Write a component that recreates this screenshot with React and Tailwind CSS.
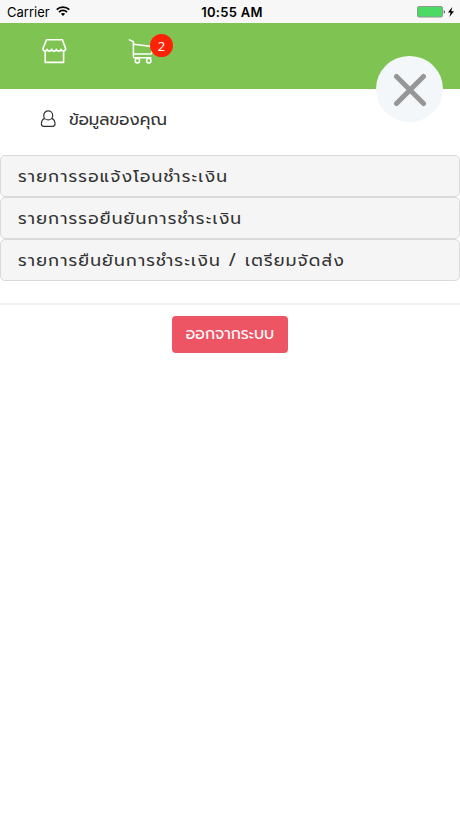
import React from "react";

const menus = [
    "รายการรอแจ้งโอนชำระเงิน",
    "รายการรอยืนยันการชำระเงิน",
    "รายการยืนยันการชำระเงิน / เตรียมจัดส่ง",
];

const StatusBar = () => (
    <div className="h-[23px] bg-[#f7f7f7] grid grid-cols-3 items-center pt-px pl-[7px] pr-[5px] text-[13px] leading-none text-black font-['Inter',sans-serif]">
        <div className="flex items-center gap-[6px]">
            <span>Carrier</span>
            <svg className="-mt-[2px]" width="14" height="10" viewBox="0 0 14 10" fill="none" stroke="#000" strokeWidth="1.7">
                <path d="M0.7 3.7C4.2 0.2 9.8 0.2 13.3 3.7" />
                <path d="M3 6.1c2.2-2.2 5.8-2.2 8 0" />
                <path d="M4.9 7.8c1.2-1.1 3-1.1 4.2 0L7 10z" fill="#000" stroke="none" />
            </svg>
        </div>
        <span className="text-center font-semibold tracking-[0.3px] pl-[2px]">10:55 AM</span>
        <div className="flex items-center justify-end">
            <svg width="38" height="12" viewBox="0 0 38 12">
                <rect x="0.5" y="0.5" width="25" height="10.5" rx="1.5" fill="#4cd964" stroke="#8b9a8d" />
                <path d="M26.8 4v3.6c1.3-.4 1.3-3.2 0-3.6z" fill="#222" />
                <path d="M35.2 1 31 6.5h2.6L32.4 11l4.6-5.8h-2.7z" fill="#000" />
            </svg>
        </div>
    </div>
);

const StoreIcon = () => (
    <svg width="26" height="26" viewBox="0 0 26 26" fill="none" stroke="#fff" strokeWidth="1.6" strokeLinejoin="round" strokeLinecap="round">
        <path d="M4.6 1.8h15.8l3.2 8.6c0 3.2-3.9 3.4-4.6.8-.7 2.6-3.9 2.6-4.6 0-.7 2.6-4 2.6-4.7 0-.7 2.6-3.9 2.6-4.6 0-.7 2.6-4.1 2.4-4.1-.8z" />
        <path d="M3.2 13.2v11.2h18.4V13.2" />
    </svg>
);

const CartIcon = () => (
    <svg width="26" height="26" viewBox="0 0 26 26" fill="none" stroke="#fff" strokeWidth="1.5" strokeLinejoin="round" strokeLinecap="round">
        <path d="M1.4 1.9l4 1.8v14.8c0 .8.4 1.2 1.2 1.2h16.2" />
        <path d="M5.4 6.3l18.6 2.2v6c0 1-.6 1.6-1.6 1.6H5.4" />
        <circle cx="9.4" cy="22.7" r="2.2" />
        <circle cx="20.8" cy="22.7" r="2.2" />
    </svg>
);

const UserIcon = () => (
    <svg width="16" height="18" viewBox="0 0 16 18" fill="none" stroke="#333" strokeWidth="1.2" strokeLinejoin="round">
        <circle cx="8.2" cy="5.4" r="4.5" />
        <path d="M4.8 8.3C2.4 9 1.4 11.2 1.4 14c0 1.6 1 2.4 2.4 2.4h8.8c1.4 0 2.4-.8 2.4-2.4 0-2.8-1-5-3.4-5.7" />
    </svg>
);

const App = () => {
    return (
        <div className="relative w-full h-[818px] overflow-hidden bg-white text-[#333] font-['Prompt','Kanit','Noto_Sans_Thai','Noto_Sans',sans-serif]">
            <StatusBar />

            {/* Header */}
            <header className="h-[66px] bg-[#7fc453] flex items-start pt-[15px] pl-[42px]">
                <StoreIcon />
                <div className="relative ml-[60px]">
                    <CartIcon />
                    <span className="absolute left-[22px] -top-[4.5px] w-[23px] h-[23px] rounded-full bg-[#fd2106] text-white text-[13px] leading-[25px] text-center font-['Noto_Sans',sans-serif]">2</span>
                </div>
            </header>

            <button className="absolute left-[376px] top-[56px] w-[67px] h-[66px] rounded-full bg-[#f4f7f9] flex items-center justify-center">
                <svg className="mt-px" width="34" height="34" viewBox="0 0 34 34" stroke="#969696" strokeWidth="5" strokeLinecap="round">
                    <path d="M3.5 3.5l27 27M30.5 3.5l-27 27" />
                </svg>
            </button>

            {/* Profile */}
            <div className="h-[66px] flex items-center gap-[13px] pl-[40px] pb-[6px]">
                <UserIcon />
                <span className="whitespace-nowrap pt-[2px] text-[16.7px] leading-none">ข้อมูลของคุณ</span>
            </div>

            <ul>
                {menus.map((label) => (
                    <li key={label} className="h-[42px] flex items-center pl-[17px] rounded-[5px] border border-[#dadada] bg-[#f5f5f5]">
                        <span className="whitespace-nowrap text-[17px] leading-none tracking-[1.18px]">{label}</span>
                    </li>
                ))}
            </ul>

            {/* Logout */}
            <div className="mt-[22px] pt-[11px] border-t-2 border-[#f0f0f0] flex justify-center">
                <button className="w-[116px] h-[37px] pt-px rounded-[4px] bg-[#ed5565] text-white text-[15.7px] leading-none">ออกจากระบบ</button>
            </div>
        </div>
    );
};

export default App;
